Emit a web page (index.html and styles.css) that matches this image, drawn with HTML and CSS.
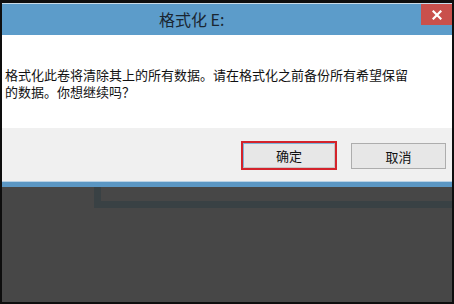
FILE: index.html
```html
<!DOCTYPE html>
<html>
<head>
    <title>格式化 E:</title>
    <meta charset="utf-8">
    <link rel="stylesheet" href="styles.css">
</head>
<body>

<div class="screen">
    <div class="dialog">
        <div class="titlebar">
            <span class="title">格式化 E:</span>
            <div class="close">
                <svg width="10" height="10" viewBox="0 0 10 10">
                    <path d="M1.5 1.5 L8.5 8.5 M8.5 1.5 L1.5 8.5" stroke="#fff" stroke-width="2.2" stroke-linecap="square"/>
                </svg>
            </div>
        </div>

        <div class="content">
            <p>格式化此卷将清除其上的所有数据。请在格式化之前备份所有希望保留的数据。你想继续吗？</p>
        </div>

        <div class="actions">
            <div class="focus-ring"><button class="btn">确定</button></div>
            <button class="btn">取消</button>
        </div>
    </div>

    <div class="backdrop">
        <div class="under-window"></div>
    </div>
</div>

</body>
</html>
```

FILE: styles.css
```css
body {
    margin: 0px;
    background: #0e0e0e;
    font-family: "Noto Sans CJK SC", "Noto Sans", sans-serif;
}

.screen {
    width: 450px;
    height: 299px;
    padding: 3px 2px 2px 2px;
    display: flex;
    flex-direction: column;
}

.dialog {
    display: flex;
    flex-direction: column;
}

.titlebar {
    height: 31px;
    background: #5c9cca;
    border-top: 1px solid #c9dcea;
    display: flex;
    align-items: flex-start;
}

.title {
    margin-left: 157px;
    margin-top: 5px;
    font-size: 16px;
    line-height: 21px;
    color: #1a2631;
}

.close {
    margin-left: auto;
    width: 31px;
    height: 21px;
    background: #c9504c;
    display: flex;
    align-items: center;
    justify-content: center;
}

.content {
    height: 93px;
    background: #ffffff;
    padding-left: 3px;
}

.content p {
    margin: 0px;
    padding-top: 31px;
    width: 412px;
    font-size: 13px;
    line-height: 17px;
    color: #111111;
}

.actions {
    height: 53px;
    background: #f0f0f0;
    border-bottom: 1px solid #b9d2e6;
    display: flex;
    justify-content: flex-end;
    align-items: flex-start;
    padding-right: 6px;
    gap: 14px;
}

.focus-ring {
    margin-top: 13px;
    border: 2px solid #d4232b;
    display: flex;
}

.btn {
    width: 95px;
    height: 26px;
    margin-top: 15px;
    font: 13px "Noto Sans CJK SC", sans-serif;
    color: #111111;
    background: #e7e7e7;
    border: 1px solid #adadad;
    padding: 0px;
}

.focus-ring .btn {
    width: 92px;
    height: 25px;
    margin: 0px;
    border-color: #7eb4d8 #c7c7c7 #c7c7c7 #7eb4d8;
}

.backdrop {
    flex: 1;
    background: #474747;
    border-top: 5px solid #5b97c4;
}

.under-window {
    margin-left: 92px;
    height: 14px;
    border-left: 7px solid #394144;
    border-bottom: 7px solid #394144;
}
```
